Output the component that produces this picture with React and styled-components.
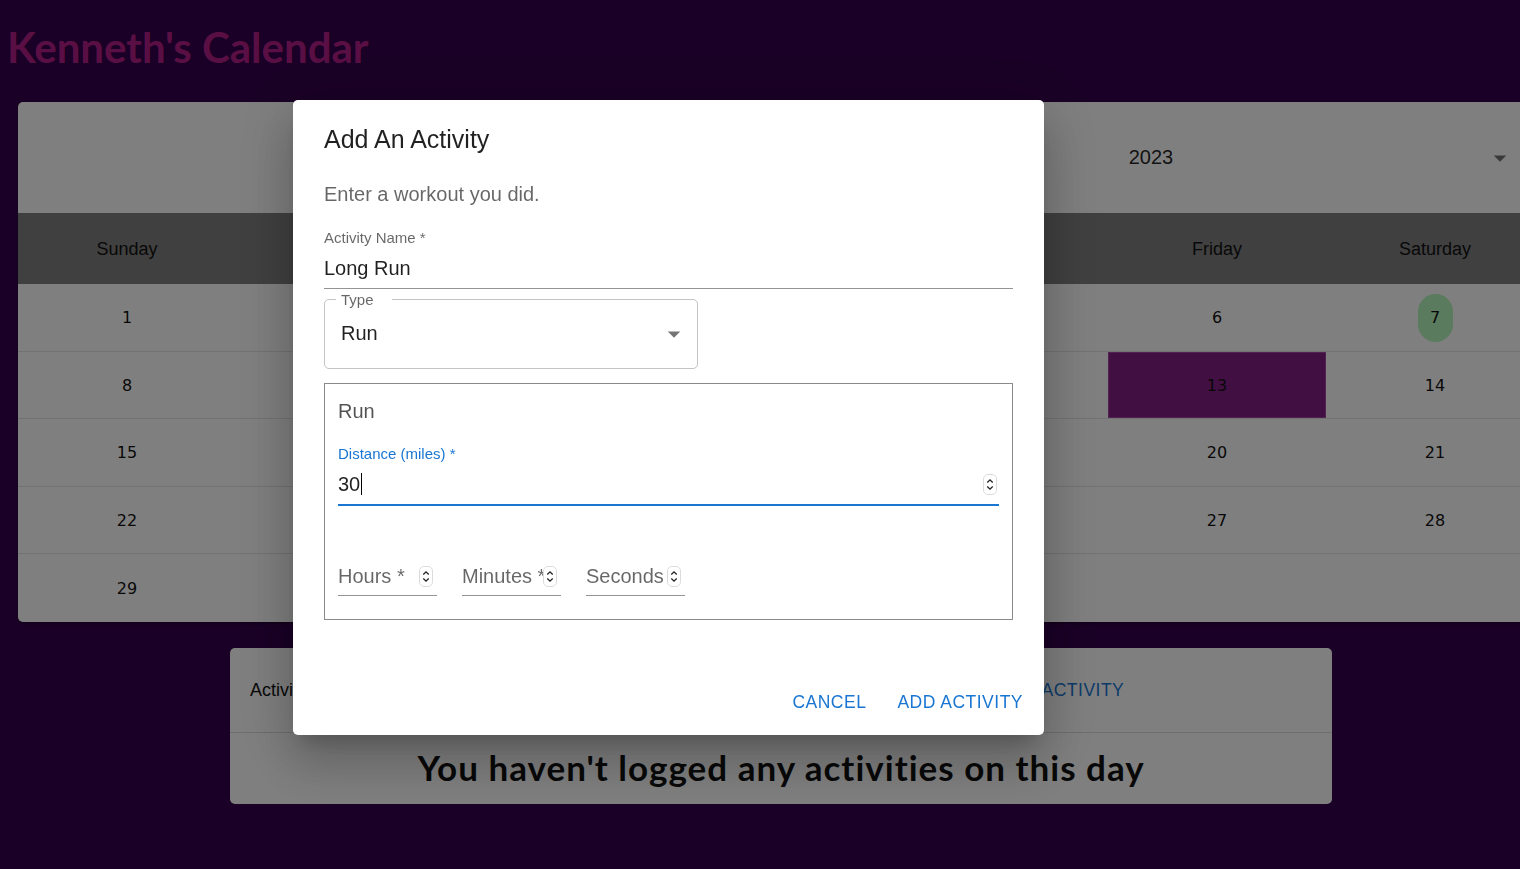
import React from "react";
import styled, { createGlobalStyle } from "styled-components";

const GlobalStyle = createGlobalStyle`
  html, body {
    margin: 0;
    overflow: hidden;
  }
  body {
    background-color: #34004c;
    font-family: "Liberation Sans", Arial, sans-serif;
  }
  * { box-sizing: border-box; }
`;

const weekdays = ["Sunday", "Monday", "Tuesday", "Wednesday", "Thursday", "Friday", "Saturday"];

const weeks = [
  [1, 2, 3, 4, 5, 6, 7],
  [8, 9, 10, 11, 12, 13, 14],
  [15, 16, 17, 18, 19, 20, 21],
  [22, 23, 24, 25, 26, 27, 28],
  [29, 30, 31, null, null, null, null],
];

const ArrowDown = () => (
  <ArrowIcon viewBox="0 0 24 24">
    <path d="M7 10l5 5 5-5z" />
  </ArrowIcon>
);

const Spinner = () => (
  <SpinIcon viewBox="0 0 14 21" width="14" height="21">
    <rect x="0.5" y="0.5" width="13" height="20" rx="4.5" fill="#fff" stroke="#dcdcdc" />
    <path d="M4.3 8.5 L7 5.8 L9.7 8.5" fill="none" stroke="#222" strokeWidth="1.3" />
    <path d="M4.3 12.5 L7 15.2 L9.7 12.5" fill="none" stroke="#222" strokeWidth="1.3" />
  </SpinIcon>
);

export default function App() {
  return (
    <>
      <GlobalStyle />
      <Page>
        <Title>Kenneth's Calendar</Title>
        <Main>
          <CalendarCard>
            <Toolbar>
              <SelectBox>
                <SelectValue>October</SelectValue>
                <ArrowDown />
              </SelectBox>
              <SelectBox>
                <SelectValue>2023</SelectValue>
                <ArrowDown />
              </SelectBox>
            </Toolbar>
            <WeekdayRow>
              {weekdays.map((d) => (
                <span key={d}>{d}</span>
              ))}
            </WeekdayRow>
            {weeks.map((week, i) => (
              <WeekRow key={i}>
                {week.map((day, j) => (
                  <DayCell key={j} $selected={day === 13}>
                    {day === 7 ? <TodayBadge>{day}</TodayBadge> : day}
                  </DayCell>
                ))}
              </WeekRow>
            ))}
          </CalendarCard>

          <ActivityPanel>
            <PanelHeader>
              <PanelHeading>Activities for October 13, 2023</PanelHeading>
              <TextButton>Add Activity</TextButton>
            </PanelHeader>
            <EmptyMessage>You haven't logged any activities on this day</EmptyMessage>
          </ActivityPanel>
        </Main>
      </Page>

      <Backdrop>
        <Dialog>
          <DialogTitle>Add An Activity</DialogTitle>
          <DialogContent>
            <ContentText>Enter a workout you did.</ContentText>

            <NameField>
              <FieldLabel>Activity Name *</FieldLabel>
              <InputLine>Long Run</InputLine>
            </NameField>

            <TypeFieldset>
              <legend>Type</legend>
              <SelectRow>
                <span>Run</span>
                <ArrowDown />
              </SelectRow>
            </TypeFieldset>

            <RunBox>
              <RunLabel>Run</RunLabel>
              <DistanceField>
                <FieldLabel $focused>Distance (miles) *</FieldLabel>
                <InputLine $focused>
                  <InputText>
                    30
                    <Caret />
                  </InputText>
                  <Spinner />
                </InputLine>
              </DistanceField>
              <TimeRow>
                {["Hours *", "Minutes *", "Seconds"].map((t) => (
                  <TimeField key={t}>
                    <Placeholder>{t}</Placeholder>
                    <Spinner />
                  </TimeField>
                ))}
              </TimeRow>
            </RunBox>
          </DialogContent>
          <DialogActions>
            <TextButton>Cancel</TextButton>
            <TextButton>Add Activity</TextButton>
          </DialogActions>
        </Dialog>
      </Backdrop>
    </>
  );
}

const Page = styled.div`
  padding-top: 22px;
`;

const Title = styled.h1`
  margin: 0 0 30px 7px;
  font-family: Lato, "Noto Sans", sans-serif;
  font-weight: 700;
  font-size: 42px;
  line-height: 50px;
  color: #b41e88;
`;

const Main = styled.main`
  width: 1526px;
  margin-left: 18px;
`;

const CalendarCard = styled.section`
  background-color: #ffffff;
  border-radius: 5px;
  overflow: hidden;
  box-shadow: 0 2px 3px rgba(0, 0, 0, 0.3);
`;

const Toolbar = styled.div`
  display: grid;
  grid-template-columns: 1fr 1fr;
  height: 111px;
`;

const SelectBox = styled.div`
  display: flex;
  align-items: center;
  padding: 0 29px 0 36px;
  font-size: 20px;
  color: rgba(0, 0, 0, 0.87);
`;

const SelectValue = styled.span`
  flex: 1;
  text-align: center;
`;

const ArrowIcon = styled.svg`
  width: 30px;
  height: 30px;
  flex: none;
  fill: rgba(0, 0, 0, 0.54);
`;

const WeekdayRow = styled.div`
  display: grid;
  grid-template-columns: repeat(7, 218px);
  align-items: center;
  height: 71px;
  padding-top: 2px;
  background-color: #808080;
  text-align: center;
  font-size: 18px;
  color: #111;
`;

const WeekRow = styled.div`
  display: grid;
  grid-template-columns: repeat(7, 218px);
  height: 67.6px;
  border-bottom: 1px solid #e4e4e4;

  &:last-child {
    border-bottom: none;
  }
`;

const DayCell = styled.div`
  display: flex;
  align-items: center;
  justify-content: center;
  padding-top: 1px;
  font-family: "DejaVu Sans", Verdana, sans-serif;
  font-size: 16px;
  color: #111;
  background-color: ${(p) => (p.$selected ? "#841e84" : "transparent")};
  border: ${(p) => (p.$selected ? "1px solid #a046a0" : "none")};
`;

const TodayBadge = styled.span`
  display: inline-flex;
  align-items: center;
  justify-content: center;
  width: 35px;
  height: 48px;
  border-radius: 18px;
  background-color: #b6f6be;
`;

const ActivityPanel = styled.section`
  width: 1102px;
  margin: 26px auto 0;
  background-color: #ffffff;
  border-radius: 5px;
  overflow: hidden;
`;

const PanelHeader = styled.div`
  display: grid;
  grid-template-columns: 1fr 1fr;
  align-items: center;
  height: 85px;
  padding: 2px 0 0 20px;
  border-bottom: 1px solid #dcdcdc;
`;

const PanelHeading = styled.span`
  font-size: 18px;
  color: #111;
`;

const TextButton = styled.button`
  justify-self: center;
  height: 45px;
  padding: 0 10px;
  border: none;
  background: none;
  font-family: "Liberation Sans", Arial, sans-serif;
  font-size: 17.5px;
  font-weight: 500;
  letter-spacing: 0.5px;
  text-transform: uppercase;
  color: #1976d2;
  cursor: pointer;
`;

const EmptyMessage = styled.div`
  display: flex;
  align-items: center;
  justify-content: center;
  height: 71px;
  padding-bottom: 3px;
  font-family: Lato, "Noto Sans", sans-serif;
  font-weight: 700;
  font-size: 35px;
  letter-spacing: 1px;
  color: #111;
`;

const Backdrop = styled.div`
  position: fixed;
  inset: 0;
  padding: 100px 0 0 293px;
  background-color: rgba(0, 0, 0, 0.5);
`;

const Dialog = styled.div`
  display: flex;
  flex-direction: column;
  width: 751px;
  height: 635px;
  background-color: #ffffff;
  border-radius: 5px;
  box-shadow: 0 14px 19px -9px rgba(0, 0, 0, 0.2),
    0 30px 48px 4px rgba(0, 0, 0, 0.14), 0 11px 57px 10px rgba(0, 0, 0, 0.12);
`;

const DialogTitle = styled.h2`
  margin: 0;
  padding: 19px 31px 20px;
  font-size: 25px;
  font-weight: 500;
  line-height: 40px;
  color: rgba(0, 0, 0, 0.87);
`;

const DialogContent = styled.div`
  flex: 1;
  display: flex;
  flex-direction: column;
  padding: 0 31px;
`;

const ContentText = styled.p`
  margin: 0;
  font-size: 20px;
  line-height: 30px;
  color: rgba(0, 0, 0, 0.6);
`;

const NameField = styled.div`
  margin-top: 20px;
`;

const FieldLabel = styled.label`
  display: block;
  font-size: 15px;
  line-height: 18px;
  color: ${(p) => (p.$focused ? "#1976d2" : "rgba(0, 0, 0, 0.6)")};
`;

const InputLine = styled.div`
  display: flex;
  align-items: center;
  justify-content: space-between;
  margin-top: 6px;
  padding: 0 2px 5px 0;
  line-height: 30px;
  font-size: 20px;
  color: rgba(0, 0, 0, 0.87);
  border-bottom: ${(p) =>
    p.$focused ? "2px solid #1976d2" : "1px solid rgba(0, 0, 0, 0.42)"};
`;

const InputText = styled.span`
  display: inline-flex;
  align-items: center;
`;

const Caret = styled.span`
  display: inline-block;
  width: 1px;
  height: 22px;
  margin-left: 1px;
  background-color: #000;
`;

const SpinIcon = styled.svg`
  flex: none;
`;

const TypeFieldset = styled.fieldset`
  width: 374px;
  margin: 2px 0 0;
  padding: 0 8px 9px 11px;
  border: 1px solid rgba(0, 0, 0, 0.23);
  border-radius: 5px;

  legend {
    width: 56px;
    padding: 0 0 0 5px;
    font-size: 15px;
    line-height: 17px;
    color: rgba(0, 0, 0, 0.6);
  }
`;

const SelectRow = styled.div`
  display: flex;
  align-items: center;
  height: 51px;
  padding-left: 5px;
  font-size: 20px;
  color: rgba(0, 0, 0, 0.87);

  span {
    flex: 1;
  }
`;

const RunBox = styled.div`
  margin-top: 14px;
  padding: 12px 13px 23px 13px;
  border: 1px solid #8a8a8a;
`;

const RunLabel = styled.div`
  font-size: 20px;
  line-height: 30px;
  color: rgba(0, 0, 0, 0.68);
`;

const DistanceField = styled.div`
  margin-top: 19px;
`;

const TimeRow = styled.div`
  display: flex;
  gap: 25px;
  margin-top: 55px;
`;

const TimeField = styled.div`
  display: flex;
  align-items: center;
  width: 99px;
  height: 35px;
  padding: 0 4px 4px 0;
  border-bottom: 1px solid rgba(0, 0, 0, 0.42);
`;

const Placeholder = styled.span`
  flex: 1;
  min-width: 0;
  white-space: nowrap;
  font-size: 20px;
  line-height: 30px;
  color: rgba(0, 0, 0, 0.6);
`;

const DialogActions = styled.div`
  display: flex;
  justify-content: flex-end;
  gap: 11px;
  padding: 10px 11px;
`;
